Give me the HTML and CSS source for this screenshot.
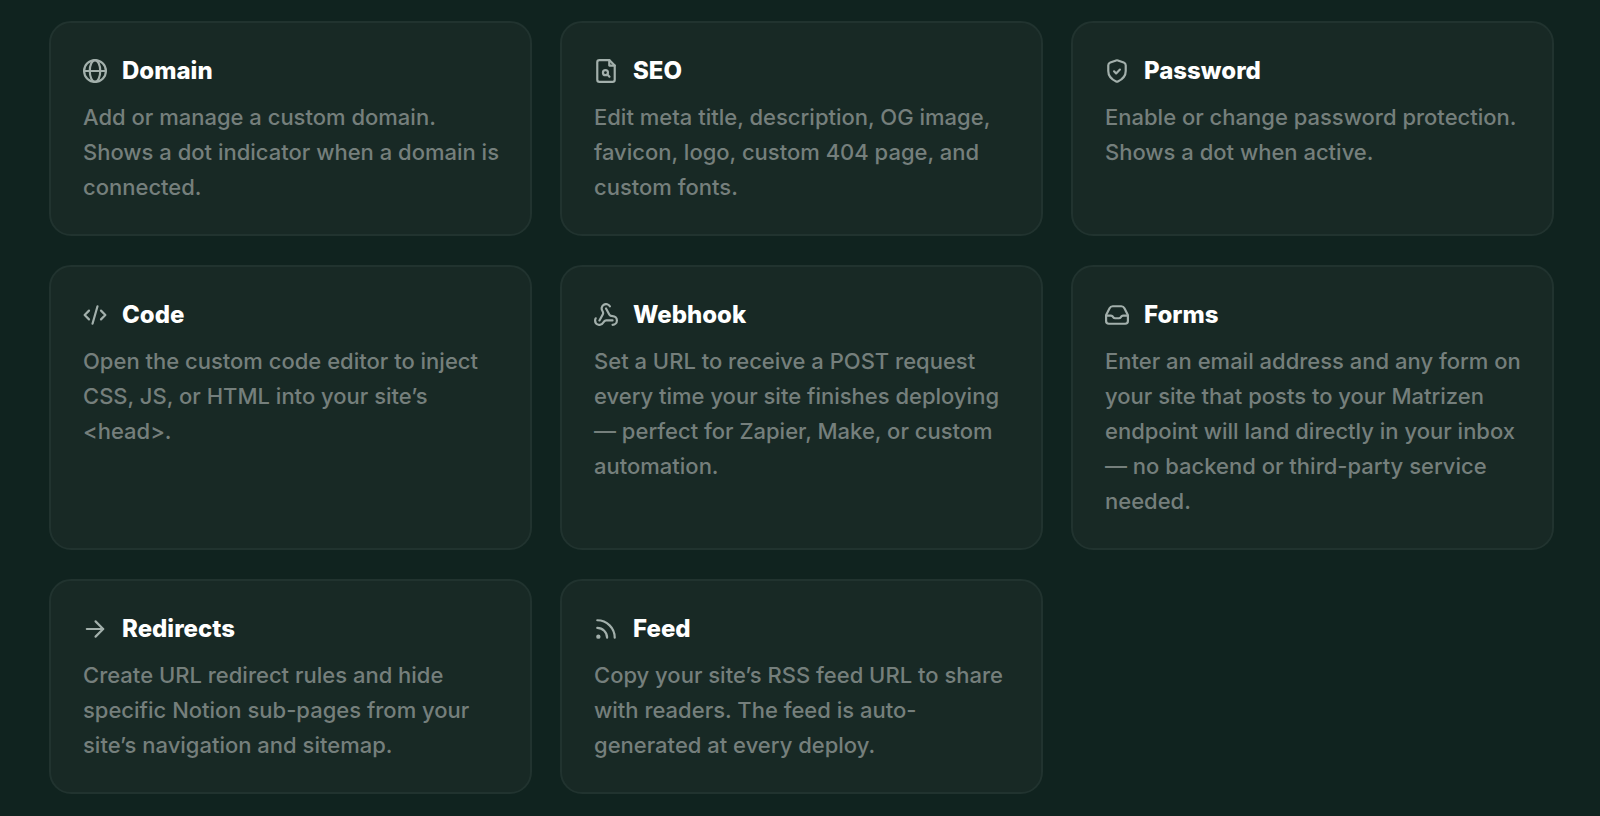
FILE: index.html
```html
<!DOCTYPE html>
<html lang="en">
<head>
<meta charset="utf-8">
<meta name="viewport" content="width=device-width, initial-scale=1">
<title>Site settings</title>
<link rel="stylesheet" href="styles.css">
</head>
<body>
<main class="cards">
  <article class="card">
    <h2 class="card-title"><svg class="icon" viewBox="1 1 22 22" aria-hidden="true"><circle cx="12" cy="12" r="10"/><ellipse cx="12" cy="12" rx="4.8" ry="10"/><path d="M2 12h20"/></svg>Domain</h2>
    <p class="card-text">Add or manage a custom domain. Shows a dot indicator when a domain is connected.</p>
  </article>
  <article class="card">
    <h2 class="card-title"><svg class="icon" viewBox="1 1 22 22" aria-hidden="true"><path d="M15 2H6a2 2 0 0 0-2 2v16a2 2 0 0 0 2 2h12a2 2 0 0 0 2-2V7z"/><path d="M15 2v5h5"/><circle cx="11.5" cy="13.500" r="2.300"/><path d="m13.200 15.200 2 2"/></svg>SEO</h2>
    <p class="card-text">Edit meta title, description, OG image, favicon, logo, custom 404 page, and custom fonts.</p>
  </article>
  <article class="card">
    <h2 class="card-title"><svg class="icon" viewBox="1 1 22 22" aria-hidden="true"><path d="M11.200 2.300a2.500 2.500 0 0 1 1.600 0l5.400 1.900A2.700 2.700 0 0 1 20 6.700V12c0 5-3.300 7.800-7.200 9.600a2 2 0 0 1-1.600 0C7.300 19.800 4 17 4 12V6.700a2.700 2.700 0 0 1 1.800-2.500z"/><path d="m9.300 12.300 1.900 1.900 3.500-3.500"/></svg>Password</h2>
    <p class="card-text">Enable or change password protection. Shows a dot when active.</p>
  </article>
  <article class="card">
    <h2 class="card-title"><svg class="icon" viewBox="1 1 22 22" aria-hidden="true"><path d="m17.500 16 4-4-4-4"/><path d="m6.500 8-4 4 4 4"/><path d="m14.300 4-4.600 16"/></svg>Code</h2>
    <p class="card-text">Open the custom code editor to inject CSS, JS, or HTML into your site’s &lt;head&gt;.</p>
  </article>
  <article class="card">
    <h2 class="card-title"><svg class="icon" viewBox="1 1 22 22" aria-hidden="true"><path d="M18 16.980h-5.990c-1.100 0-1.950.94-2.480 1.900A4 4 0 0 1 2 17c.01-.7.200-1.400.57-2"/><path d="m6 17 3.130-5.780c.53-.97.100-2.180-.500-3.100a4 4 0 1 1 6.890-4.060"/><path d="m12 6 3.130 5.730C15.660 12.700 16.900 13 18 13a4 4 0 0 1 0 8"/></svg>Webhook</h2>
    <p class="card-text">Set a URL to receive a POST request every time your site finishes deploying — perfect for Zapier, Make, or custom automation.</p>
  </article>
  <article class="card">
    <h2 class="card-title"><svg class="icon" viewBox="1 1 22 22" aria-hidden="true"><path d="M22 12.500h-4.500a2 2 0 0 0-1.700 1l-.400.600a2 2 0 0 1-1.700.9h-3.400a2 2 0 0 1-1.700-.9l-.400-.600a2 2 0 0 0-1.700-1H2"/><path d="M5.200 5.800 2.400 11.200a4 4 0 0 0-.4 1.800v4.500A2.500 2.500 0 0 0 4.500 20h15a2.500 2.500 0 0 0 2.500-2.500V13a4 4 0 0 0-.4-1.800l-2.800-5.400A3.300 3.300 0 0 0 15.900 4H8.100a3.300 3.300 0 0 0-2.900 1.800z"/></svg>Forms</h2>
    <p class="card-text">Enter an email address and any form on your site that posts to your Matrizen endpoint will land directly in your inbox — no backend or third-party service needed.</p>
  </article>
  <article class="card">
    <h2 class="card-title"><svg class="icon" viewBox="1 1 22 22" aria-hidden="true"><path d="M4.500 12h15"/><path d="m12.500 5 7 7-7 7"/></svg>Redirects</h2>
    <p class="card-text">Create URL redirect rules and hide specific Notion sub-pages from your site’s navigation and sitemap.</p>
  </article>
  <article class="card">
    <h2 class="card-title"><svg class="icon" viewBox="1 1 22 22" aria-hidden="true"><path d="M4 11a9 9 0 0 1 9 9"/><path d="M4 4a16 16 0 0 1 16 16"/><circle cx="5" cy="19" r="1"/></svg>Feed</h2>
    <p class="card-text">Copy your site’s RSS feed URL to share with readers. The feed is auto-generated at every deploy.</p>
  </article>
</main>
</body>
</html>
```
FILE: styles.css
```css
* {
  box-sizing: border-box;
}

body {
  margin: 0;
  background: #10231f;
  color: #fff;
  font-family: Inter, "Liberation Sans", sans-serif;
}

.cards {
  display: grid;
  grid-template-columns: repeat(3, minmax(0, 1fr));
  gap: 29px 28px;
  padding: 21px 46px 21px 49px;
}

.card {
  padding: 32px 28px 29px 32px;
  border: 2px solid #21332f;
  border-radius: 22px;
  background: #182925;
}

.card-title {
  display: flex;
  align-items: center;
  gap: 15px;
  margin: 0 0 13px;
  font-size: 24px;
  font-weight: 800;
  line-height: 32px;
}

.icon {
  flex: none;
  width: 24px;
  height: 24px;
  fill: none;
  stroke: #a3b0ac;
  stroke-width: 2;
  stroke-linecap: round;
  stroke-linejoin: round;
}

.card-text {
  margin: 0;
  color: #757f7c;
  font-size: 22px;
  font-weight: 450;
  line-height: 35px;
}
```
